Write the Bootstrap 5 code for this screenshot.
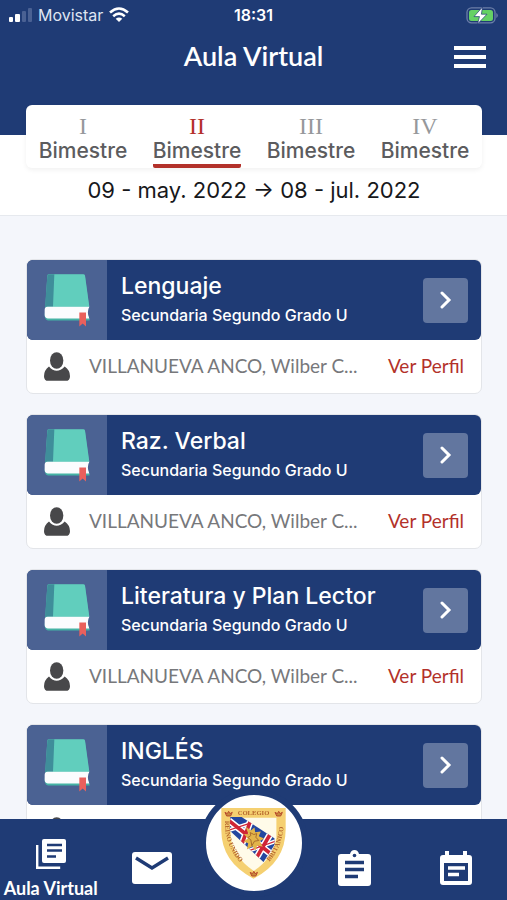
<!DOCTYPE html>
<html lang="es">
<head>
<meta charset="utf-8">
<meta name="viewport" content="width=device-width, initial-scale=1">
<title>Aula Virtual</title>
<link href="https://cdn.jsdelivr.net/npm/bootstrap@5.3.0/dist/css/bootstrap.min.css" rel="stylesheet">
<style>
:root { --navy: #1f3b75; --brick: #b3312a; }
body { font-family: Inter, "Liberation Sans", sans-serif; background: #f4f6fb; }
.navy { background: var(--navy); color: #fff; }
svg { display: block; flex: none; }
.status { height: 30px; padding: 0 9px; font-size: 16px; line-height: 30px; color: #dfe5f2; }
.clock { font-weight: 600; color: #fff; }
.carrier { margin: 0 6px; }
.titlebar { height: 75px; padding: 0 21px; }
.titlebar h1 { font-family: Lato, sans-serif; font-size: 27px; line-height: 52px; font-weight: 600; }
.side { flex: 1 1 0; }
.period { background: linear-gradient(var(--navy) 30px, #fff 30px); border-bottom: 1px solid #e6e9ee; padding: 0 25px 0 26px; }
.terms { background: #fff; border-radius: 6px; height: 63px; box-shadow: 0 2px 5px rgba(0,0,0,.06); }
.term { padding: 8px 0 0; border: 0; background: none; font-size: 21px; line-height: 24px; font-weight: 500; color: #5c5c5e; }
.term b { display: block; font: 24px/25px "Liberation Serif", serif; color: #96989b; }
.term span { display: inline-block; height: 29px; border-bottom: 4px solid transparent; border-radius: 2px; }
.term.active b { color: var(--brick); }
.term.active span { border-color: var(--brick); }
.dates { font-size: 22px; line-height: 44px; color: #17181b; padding-bottom: 3px; }
.courses { padding: 43px 25px 20px 26px; gap: 20px; }
.course { background: #fff; border: 1px solid #e3e5e9; border-radius: 7px; height: 135px; }
.course-top { height: 80px; border-radius: 6px; overflow: hidden; }
.cover { width: 80px; background: #4b6293; padding-left: 17px; }
.names { padding: 0 0 2px 14px; }
.course h2 { font-size: 23px; line-height: 30px; font-weight: 500; }
.course p { font-size: 16px; line-height: 24px; font-weight: 500; padding-top: 2px; }
.go { width: 45px; height: 45px; border: 0; border-radius: 4px; background: #62769f; margin-right: 13px; }
.teacher { font-size: 19px; height: 53px; padding: 0 17px; color: #77787b; font-family: Lato, sans-serif; }
.teacher span { margin-left: 19px; }
.teacher a { color: var(--brick); text-decoration: none; }
.tabs { height: 81px; }
.tabs a { flex: 1 1 0; min-width: 0; color: #fff; text-decoration: none; font: 700 18px/20px Lato, sans-serif; padding-top: 20px; height: 81px; }
.tabs a.solo { padding-top: 31px; }
.stack { margin-bottom: 9px; }
.crest { flex: none; width: 108px; height: 108px; border: 6px solid var(--navy); background: #fff; margin-top: -30px; }
</style>
<script src="https://cdn.jsdelivr.net/npm/bootstrap@5.3.0/dist/js/bootstrap.bundle.min.js"></script>
</head>
<body>
<svg width="0" height="0" class="position-absolute" aria-hidden="true">
  <symbol id="book" viewBox="0 0 138 158">
    <path d="M14 2h104q4 0 5 5l12 90-8 12 10 28q1 2-2 2H12q-9-2-10-16z" fill="#45b3a5"/>
    <path d="M14 0h104q4 0 5 4l13 94H4L10 5q0-5 4-5z" fill="#61cebd"/>
    <path d="M14 0h17l-4 98H3L10 5q0-5 4-5z" fill="#3f8e9a"/>
    <path d="M11 98h125q-9 16 0 35H11q-9-1-9-11v-15q0-9 9-9z" fill="#fbfcfe"/>
    <path d="M106 115h20v42l-10-9-10 9z" fill="#e9605c"/>
  </symbol>
  <symbol id="person" viewBox="0 0 78 86">
    <ellipse cx="38" cy="25" rx="20" ry="25" fill="#48484a"/>
    <path d="M15 43Q26 56 38 56T62 43Q78 54 78 72q0 14-13 14H13Q0 86 0 72q0-18 15-29z" fill="#48484a"/>
  </symbol>
  <symbol id="chev" viewBox="0 0 12 18"><path d="M2 2l7 7-7 7" fill="none" stroke="#fff" stroke-width="3" stroke-linecap="round"/></symbol>
</svg>

<header class="navy">
  <div class="status d-flex align-items-center">
    <div class="side d-flex align-items-center">
      <svg width="23" height="14" viewBox="0 0 23 14" fill="#fff"><rect y="9" width="4" height="5" rx="1"/><rect x="6" y="6" width="5" height="8" rx="1"/><g fill="#4a6193"><rect x="13" y="3" width="4" height="11" rx="1"/><rect x="19" width="4" height="14" rx="1"/></g></svg>
      <span class="carrier">Movistar</span>
      <svg width="20" height="16" viewBox="0 0 20 16" fill="none" stroke="#fff" stroke-width="2.6"><path d="M1 5.500q9-8 18 0M4.200 9.200q5.800-5 11.600 0"/><path d="M10 15l-3.300-3.300q3.300-2.600 6.600 0z" fill="#fff" stroke="none"/></svg>
    </div>
    <span class="clock">18:31</span>
    <div class="side d-flex justify-content-end">
      <svg width="33" height="17" viewBox="0 0 33 17"><rect x="2" y=".8" width="28" height="15" rx="4.500" fill="none" stroke="#6c7fa8" stroke-width="1.300"/><path d="M31.300 6v5q1.500-.6 1.500-2.500T31.300 6z" fill="#6c7fa8"/><rect x="4" y="3" width="24" height="11" rx="2.500" fill="#65d165"/><path d="M17.500 0L9 9.600h5.500L12.500 17 22 7.200h-5.600z" fill="#fff" stroke="#1f3b75" stroke-width=".7"/></svg>
    </div>
  </div>
  <div class="titlebar d-flex align-items-start">
    <div class="side"></div>
    <h1 class="m-0">Aula Virtual</h1>
    <div class="side d-flex justify-content-end">
      <button class="btn border-0 p-0 mt-3" aria-label="Menú"><svg width="32" height="22" viewBox="0 0 32 22" fill="#fff"><path d="M0 0h32v4H0zM0 9h32v4H0zM0 18h32v4H0z"/></svg></button>
    </div>
  </div>
</header>

<section class="period">
  <div class="terms d-flex">
    <button class="term col"><b>I</b><span>Bimestre</span></button>
    <button class="term col active"><b>II</b><span>Bimestre</span></button>
    <button class="term col"><b>III</b><span>Bimestre</span></button>
    <button class="term col"><b>IV</b><span>Bimestre</span></button>
  </div>
  <div class="dates text-center">09 - may. 2022 → 08 - jul. 2022</div>
</section>

<main class="courses d-flex flex-column">
  <article class="course">
    <div class="course-top navy d-flex align-items-center">
      <div class="cover h-100 d-flex align-items-center"><svg width="46" height="53"><use href="#book"/></svg></div>
      <div class="names flex-grow-1"><h2 class="m-0">Lenguaje</h2><p class="m-0">Secundaria Segundo Grado U</p></div>
      <button class="go d-flex align-items-center justify-content-center" aria-label="Abrir Lenguaje"><svg width="12" height="18"><use href="#chev"/></svg></button>
    </div>
    <div class="teacher d-flex align-items-center"><svg width="26" height="29"><use href="#person"/></svg><span class="text-nowrap">VILLANUEVA ANCO, Wilber C...</span><a class="ms-auto" href="#">Ver Perfil</a></div>
  </article>
  <article class="course">
    <div class="course-top navy d-flex align-items-center">
      <div class="cover h-100 d-flex align-items-center"><svg width="46" height="53"><use href="#book"/></svg></div>
      <div class="names flex-grow-1"><h2 class="m-0">Raz. Verbal</h2><p class="m-0">Secundaria Segundo Grado U</p></div>
      <button class="go d-flex align-items-center justify-content-center" aria-label="Abrir Raz. Verbal"><svg width="12" height="18"><use href="#chev"/></svg></button>
    </div>
    <div class="teacher d-flex align-items-center"><svg width="26" height="29"><use href="#person"/></svg><span class="text-nowrap">VILLANUEVA ANCO, Wilber C...</span><a class="ms-auto" href="#">Ver Perfil</a></div>
  </article>
  <article class="course">
    <div class="course-top navy d-flex align-items-center">
      <div class="cover h-100 d-flex align-items-center"><svg width="46" height="53"><use href="#book"/></svg></div>
      <div class="names flex-grow-1"><h2 class="m-0">Literatura y Plan Lector</h2><p class="m-0">Secundaria Segundo Grado U</p></div>
      <button class="go d-flex align-items-center justify-content-center" aria-label="Abrir Literatura y Plan Lector"><svg width="12" height="18"><use href="#chev"/></svg></button>
    </div>
    <div class="teacher d-flex align-items-center"><svg width="26" height="29"><use href="#person"/></svg><span class="text-nowrap">VILLANUEVA ANCO, Wilber C...</span><a class="ms-auto" href="#">Ver Perfil</a></div>
  </article>
  <article class="course">
    <div class="course-top navy d-flex align-items-center">
      <div class="cover h-100 d-flex align-items-center"><svg width="46" height="53"><use href="#book"/></svg></div>
      <div class="names flex-grow-1"><h2 class="m-0">INGLÉS</h2><p class="m-0">Secundaria Segundo Grado U</p></div>
      <button class="go d-flex align-items-center justify-content-center" aria-label="Abrir INGLÉS"><svg width="12" height="18"><use href="#chev"/></svg></button>
    </div>
    <div class="teacher d-flex align-items-center"><svg width="26" height="29"><use href="#person"/></svg></div>
  </article>
</main>

<nav class="tabs navy fixed-bottom d-flex">
  <a href="#" class="d-flex flex-column align-items-center text-nowrap"><svg class="stack" width="30" height="30" viewBox="0 0 30 30"><path d="M1.200 6v22.800h23" fill="none" stroke="#fff" stroke-width="2.400"/><rect x="6" y="0" width="24" height="24" rx="2" fill="#fff"/><path d="M11 6h15M11 11.500h15M11 17.500h9" stroke="#1f3b75" stroke-width="2.300"/></svg><span>Aula Virtual</span></a>
  <a href="#" class="solo d-flex justify-content-center" aria-label="Mensajes"><svg width="40" height="38" viewBox="0 0 40 38"><rect y="2" width="40" height="32" rx="3" fill="#fff"/><path d="M4 8l16 10L36 8" fill="none" stroke="#1f3b75" stroke-width="3.400"/></svg></a>
  <a href="#" class="p-0 d-flex justify-content-center" aria-label="Colegio Reino Unido Británico">
    <div class="crest rounded-circle d-flex align-items-center justify-content-center">
      <svg width="65" height="71" viewBox="0 0 196 214">
        <defs>
          <path id="lside" d="M12 38Q9 130 88 192"/><path id="rside" d="M146 162Q190 110 189 38"/>
          <clipPath id="band"><path d="M28 27H62L162 92V110L128 163 26 68z"/></clipPath>
        </defs>
        <path d="M1 0h194v60q2 102-97 153Q-2 162 1 60z" fill="#f5d071"/>
        <path d="M29 29h138v60q-8 60-68 101Q38 149 29 89z" fill="#fffbe9"/>
        <g clip-path="url(#band)">
          <path d="M20 20h150v150H20z" fill="#2447a0"/>
          <g fill="none" stroke="#fff"><path d="M24 38L150 138M92 30L62 112M150 76L106 152" stroke-width="20"/><path d="M20 68L100 42M70 134L170 98" stroke-width="12"/></g>
          <g fill="none" stroke="#cf2536"><path d="M24 38L150 138M92 30L62 112M150 76L106 152" stroke-width="11"/><path d="M20 68L100 42M70 134L170 98" stroke-width="4"/></g>
        </g>
        <path d="M74 56l16 12 11-9 2 14 17-2-6 14 16 7-13 8 9 17-17-4-5 15-9-13-17 10 4-19-14-5 13-9-12-14 14 1z" fill="#e2b54a"/>
        <path d="M88 74l11 6 9-3-3 11 9 10-13 2-8 14-3-18-9-7 9-6z" fill="none" stroke="#a66b2b" stroke-width="3"/>
        <g fill="#c98a3c" stroke="#b4472b" stroke-width="3"><path d="M12 13l5 11h12l5-11-7 4-4-7-4 7z"/><path d="M163 13l5 11h12l5-11-7 4-4-7-4 7z"/><path d="M88 194l5 11h12l5-11-7 4-4-7-4 7z"/></g>
        <g fill="#b5652c" font-family="Liberation Serif, serif" font-size="20">
          <text x="98" y="22" text-anchor="middle">COLEGIO</text>
          <text><textPath href="#lside">REINO UNIDO</textPath></text>
          <text><textPath href="#rside">BRITÁNICO</textPath></text>
        </g>
      </svg>
    </div>
  </a>
  <a href="#" class="solo d-flex justify-content-center" aria-label="Tareas"><svg width="33" height="37" viewBox="0 0 33 37"><path d="M3 4h9q1-4 4.500-4T21 4h9q3 0 3 3v26q0 3-3 3H3q-3 0-3-3V7q0-3 3-3z" fill="#fff"/><circle cx="16.500" cy="5.500" r="1.800" fill="#1f3b75"/><path d="M7 12.500h19M7 19.500h19M7 26.500h13" stroke="#1f3b75" stroke-width="3.600"/></svg></a>
  <a href="#" class="solo d-flex justify-content-center" aria-label="Agenda"><svg width="32" height="37" viewBox="0 0 32 37"><path d="M3 5h2V1h4v4h14V1h4v4h2q3 0 3 3v24q0 3-3 3H3q-3 0-3-3V8q0-3 3-3z" fill="#fff"/><path d="M4 13h24v18H4z" fill="#1f3b75"/><path d="M8 18h17M8 24.500h11" stroke="#fff" stroke-width="3.400"/></svg></a>
</nav>
</body>
</html>
